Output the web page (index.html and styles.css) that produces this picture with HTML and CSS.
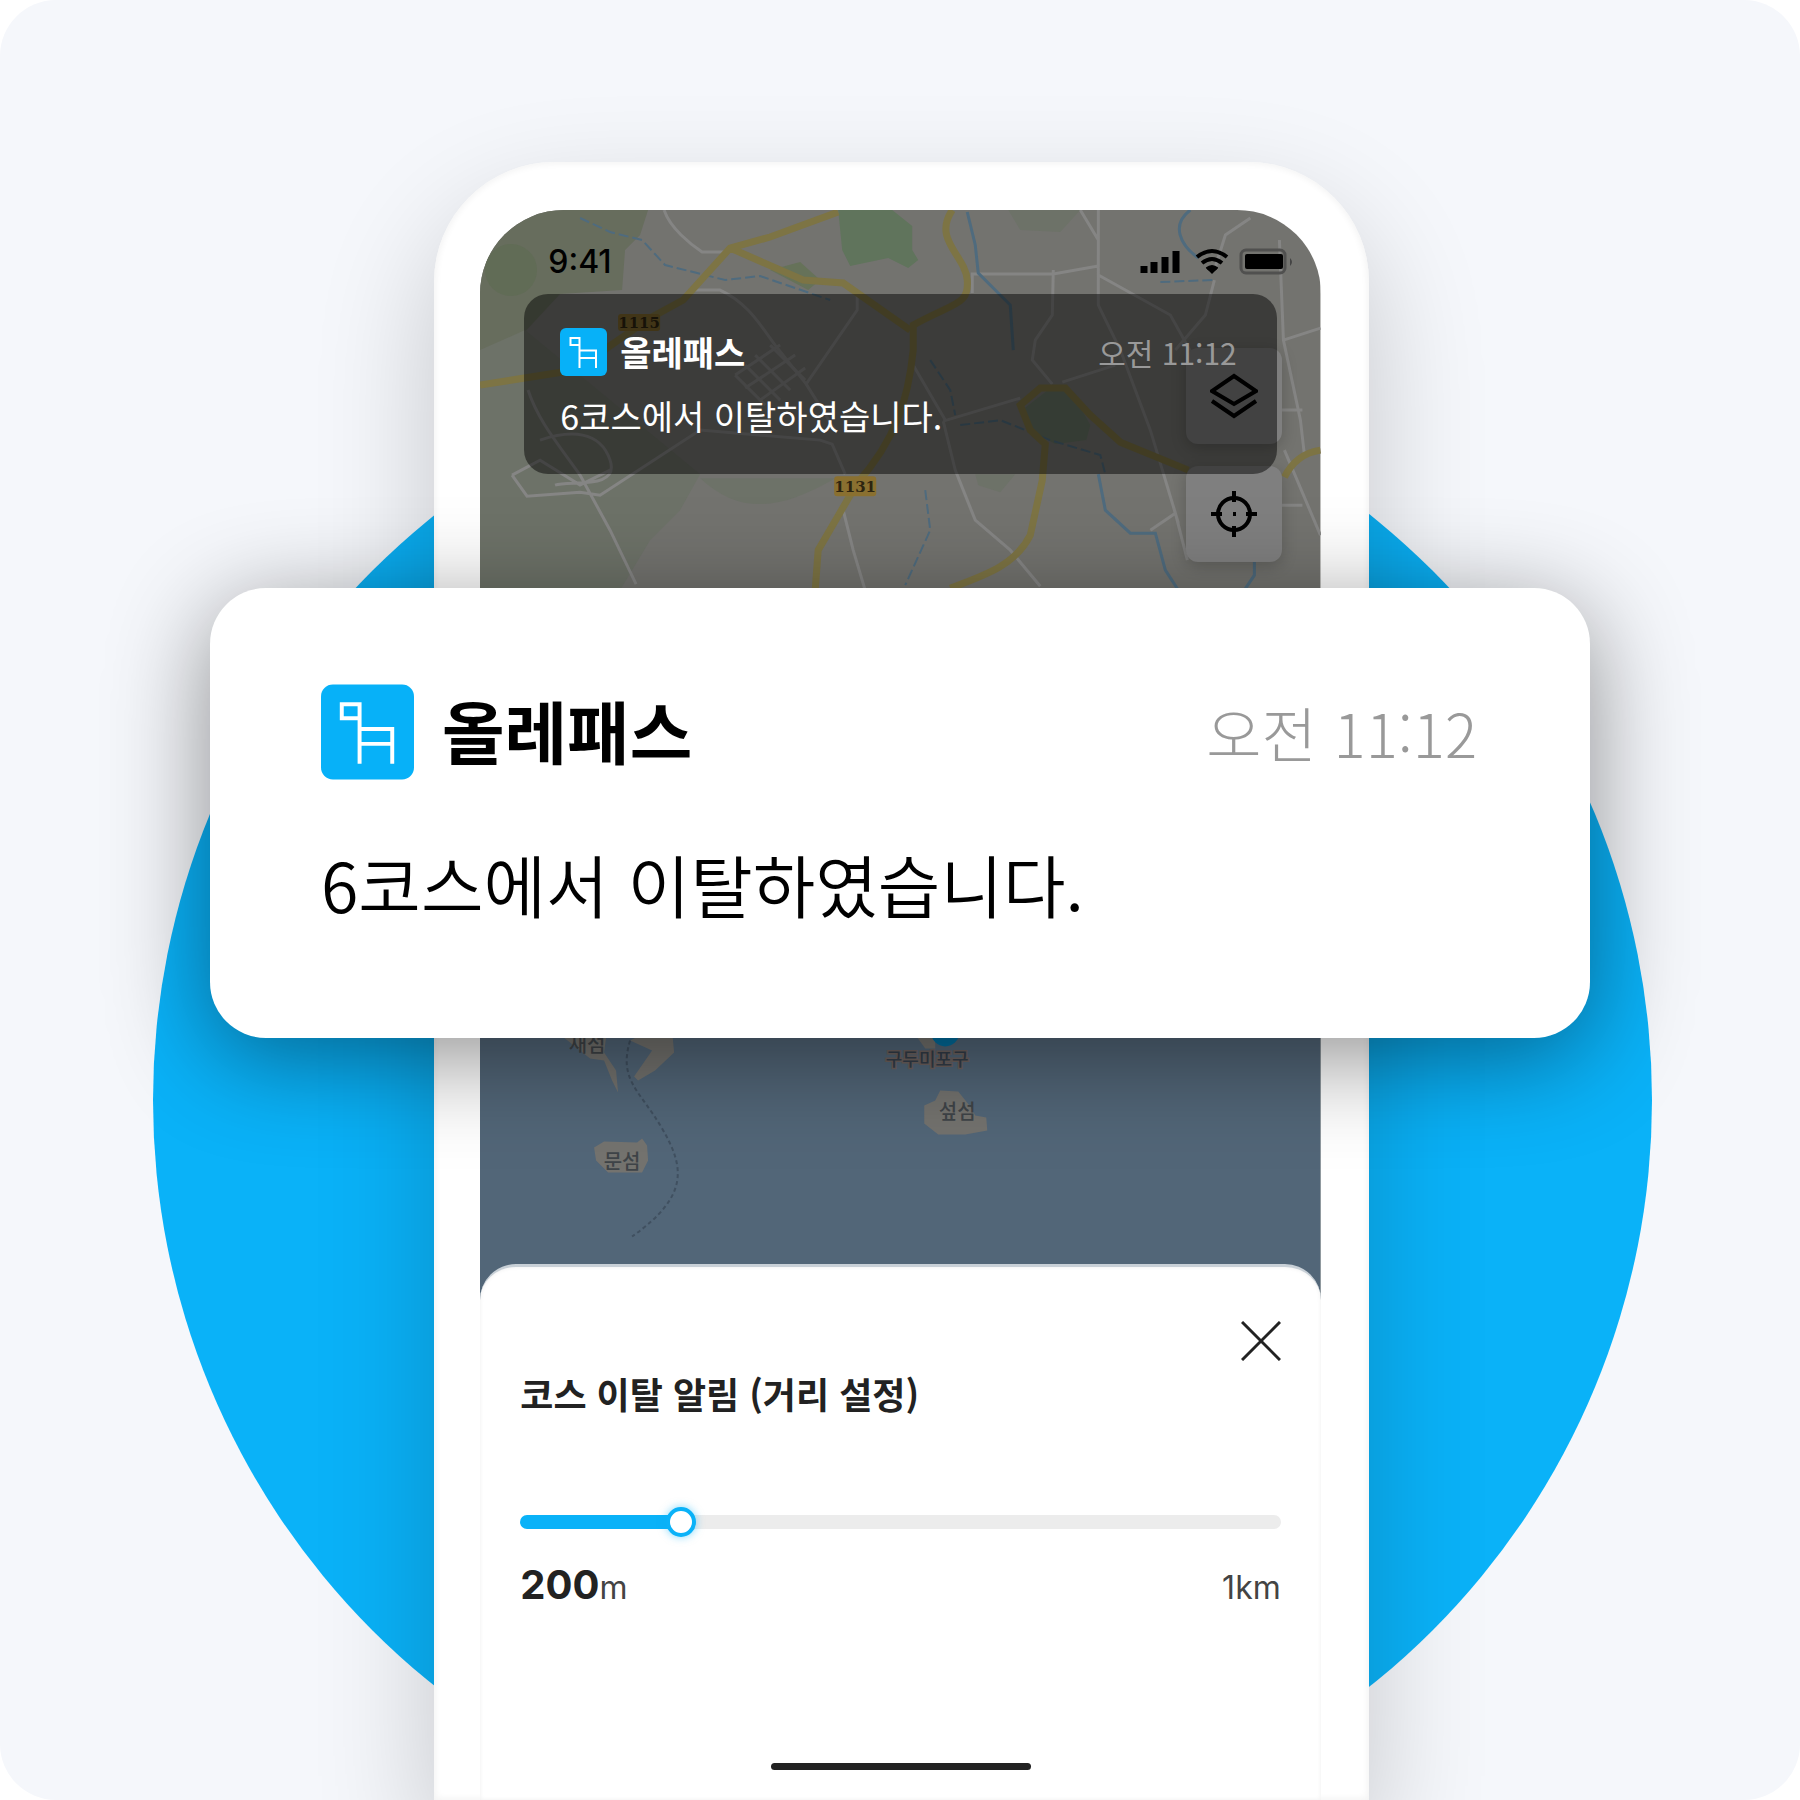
FILE: index.html
```html
<!DOCTYPE html>
<html lang="ko">
<head>
<meta charset="utf-8">
<meta name="viewport" content="width=device-width, initial-scale=1">
<title>올레패스</title>
<link rel="stylesheet" href="styles.css">
</head>
<body>
<svg width="0" height="0" class="defs" aria-hidden="true">
  <symbol id="logo" viewBox="0 0 94 96">
    <rect width="94" height="96" rx="12" fill="#07b1f8"/>
    <path d="M39 80V20H21V34H39M39 45H72V80M39 60H72" fill="none" stroke="#fff" stroke-width="4"/>
  </symbol>
</svg>
<main class="stage">
  <div class="disc"></div>
  <section class="phone">
    <div class="screen">
      <div class="map">
        <svg class="map-art" viewBox="480 210 840 1100" preserveAspectRatio="xMidYMin slice" aria-hidden="true">
          <rect x="480" y="210" width="840" height="1100" fill="#73736f"/>
          <path d="M480 210H648L640 235 625 250 622 290 560 294 480 380Z" fill="#676d5d"/>
          <path d="M480 350L525 330 700 474 680 510 650 540 620 590H480Z" fill="#6d7268"/>
          <path d="M700 478C740 515 780 510 835 478Z" fill="#6d7268"/>
          <circle cx="511" cy="270" r="26" fill="#616c56"/>
          <path d="M838 210H892L912 226V250L918 260 908 268 888 258 850 266 842 250Z" fill="#60745c"/>
          <path d="M770 270L800 262 820 280 808 290Z" fill="#667259"/>
          <path d="M1008 210H1080L1060 232 1020 230ZM975 474H1015L1000 492 978 485Z" fill="#6d7268"/>
          <path d="M1022 410L1053 386 1070 390 1090 425 1086 440 1055 444 1030 430Z" fill="#667464"/>
          <g fill="none" stroke="#858584" stroke-width="3">
            <path d="M664 210C670 228 690 244 702 252H728M690 290H720C748 303 760 325 775 345L806 384 857 310V296M806 384L835 430M528 390C538 420 555 440 580 475L610 530 636 584M512 475L527 496 580 492 600 495 700 430 820 440 832 444 845 474M843 510L853 550 865 590M512 475L540 460 580 485 610 470M540 440C570 430 600 430 610 460S570 480 555 485"/>
            <path d="M735 375L765 405M745 365L780 400M755 355L790 390M770 345L805 380M735 375L780 345M745 388L795 355M760 400L805 368"/>
            <path d="M972 293V274H1053L1098 266V210M1098 266V305L1120 350 1150 430 1178 523M1053 270 1052 315 1035 340 1032 360 1052 384M1080 210L1098 240M1098 275L1170 315 1195 360M1214 280L1205 315 1175 350M1214 270L1225 235 1250 218M1279 240 1283 340 1300 420 1304 455M1283 340 1320 328M1280 410H1302M1284 450L1320 535M1281 505H1302M943 421L955 470 975 520 1010 550 1040 586M943 421L1020 398M1062 382L1115 365M1150 530L1175 513 1187 560M910 360L945 420"/>
          </g>
          <g fill="none" stroke="#4f6b7e" stroke-width="3">
            <path d="M967 212L975 245 978 273 1010 305 1013 350M1190 210C1170 225 1180 245 1198 258M1098 474 1105 510 1130 533 1155 533 1165 570 1178 590M1254 560V575L1244 590"/>
            <path d="M580 218L610 232 642 240 665 265 725 280 760 276 830 300M930 360L950 390 955 415M960 425L1000 420 1050 440 1100 455 1105 474M925 490 930 530 905 585M1160 282 1212 280" stroke-width="2" stroke-dasharray="10 4"/>
          </g>
          <g fill="none" stroke="#7d7444" stroke-width="7">
            <path d="M480 385L575 370 650 318 683 300 730 248 770 237 838 212M730 248L803 280 843 283 900 323 910 330M952 210C932 240 965 255 967 280S955 302 913 325V350C908 400 895 440 857 483L818 550 815 590M1320 450C1300 453 1290 465 1284 477M1188 470L1120 442 1090 415 1065 388 1040 388 1020 405 1030 430 1045 444 1042 480 1030 535C1015 565 985 575 950 588"/>
          </g>
          <rect x="618" y="314" width="42" height="17" rx="3" fill="#7d662c"/>
          <text class="road" x="639" y="328">1115</text>
          <rect x="834" y="476" width="42" height="20" rx="3" fill="#8a7030"/>
          <text class="road" x="855" y="492">1131</text>
          <path d="M480 650H1320V1310H480Z" fill="#526678"/>
          <g fill="#74736f">
            <path d="M555 1030H607L604 1052 616 1070 618 1092 612 1080 604 1060 590 1058ZM630 1040L650 1030H672L674 1052 655 1070 638 1080 634 1076 652 1050ZM912 1030H935V1048H925Z"/>
            <path d="M924 1105L935 1100 940 1090 958 1091 970 1106 975 1115 986 1117 987 1130 965 1134 938 1134 924 1123ZM594 1147L604 1141 637 1142 642 1138 647 1145 648 1160 642 1172 608 1172 596 1160Z"/>
          </g>
          <circle cx="945" cy="1032" r="14" fill="#006fa1"/>
          <path d="M630 1040C618 1080 640 1090 662 1128S690 1195 632 1236" fill="none" stroke="#405060" stroke-width="2" stroke-dasharray="4 3"/>
          <g class="place">
            <text x="587" y="1052">새섬</text>
            <text x="927" y="1066" class="port">구두미포구</text>
            <text x="957" y="1119">섶섬</text>
            <text x="622" y="1169">문섬</text>
          </g>
        </svg>
        <div class="tools">
          <button class="tool" type="button" aria-label="지도 레이어">
            <svg viewBox="0 0 48 48"><path d="M24 4L46 19 24 32 2 19ZM2 29L24 44 46 29"/></svg>
          </button>
          <button class="tool" type="button" aria-label="현재 위치">
            <svg viewBox="0 0 48 48"><circle cx="24" cy="24" r="16"/><path d="M24 1V12M24 36V47M1 24H12M36 24H47M23 24H26"/></svg>
          </button>
        </div>
        <header class="status">
          <time>9:41</time>
          <svg class="status-icons" viewBox="0 0 154 28" aria-hidden="true">
            <path d="M4 18V25M14 14V25M25 9V25M36 3V25" stroke="#000" stroke-width="7"/>
            <path d="M57 9Q72-3 87 9M62 15Q72 7 82 15M67 21Q72 17 77 21" fill="none" stroke="#000" stroke-width="4"/>
            <path d="M66 20H78L72 26Z"/>
            <rect x="101" y="2" width="44" height="23" rx="5" fill="none" stroke="#50504f" stroke-width="3"/>
            <rect x="105" y="6" width="38" height="15" rx="2"/>
            <path d="M150 10Q154 14 150 18Z" fill="#444"/>
          </svg>
        </header>
        <article class="notice notice-small">
          <div class="notice-head">
            <svg class="logo" aria-hidden="true"><use href="#logo"/></svg>
            <strong>올레패스</strong>
            <time>오전 11:12</time>
          </div>
          <p>6코스에서 이탈하였습니다.</p>
        </article>
      </div>
      <form class="sheet">
        <button class="close" type="button" aria-label="닫기">
          <svg viewBox="0 0 40 40"><path d="M1 1L39 39M39 1L1 39"/></svg>
        </button>
        <label class="sheet-title" for="distance">코스 이탈 알림 (거리 설정)</label>
        <input class="slider" id="distance" type="range" min="0" max="1000" value="200">
        <div class="scale">
          <span><b>200</b>m</span>
          <span>1km</span>
        </div>
        <div class="home"></div>
      </form>
    </div>
  </section>
  <article class="notice notice-large">
    <div class="notice-head">
      <svg class="logo" aria-hidden="true"><use href="#logo"/></svg>
      <strong>올레패스</strong>
      <time>오전 11:12</time>
    </div>
    <p>6코스에서 이탈하였습니다.</p>
  </article>
</main>
</body>
</html>
```
FILE: styles.css
```css
* {
  box-sizing: border-box;
}

body {
  margin: 0;
  background: #fff;
  font-family: "Noto Sans CJK KR", "Noto Sans", sans-serif;
}

button {
  padding: 0;
  border: 0;
  background: none;
}

.defs {
  position: absolute;
}

.stage {
  position: relative;
  display: flex;
  justify-content: center;
  min-height: 100vh;
  padding: 162px 0 0 3px;
  overflow: hidden;
  border-radius: 56px;
  background: #f5f7fb;
}

.disc {
  position: absolute;
  top: 351px;
  left: 8.5%;
  width: 83.3%;
  aspect-ratio: 1;
  border-radius: 50%;
  background: #0ab2f8;
}

.phone {
  position: relative;
  display: flex;
  width: 52%;
  padding: 48px 48px 0 46px;
  border-radius: 120px 120px 0 0;
  background: #fff;
  box-shadow: inset 0 0 6px 2px #f4f4f4, 0 50px 120px rgba(0, 0, 0, .2);
}

.screen {
  display: flex;
  flex: 1;
  flex-direction: column;
  min-width: 0;
  overflow: hidden;
  border-radius: 84px 84px 0 0;
}

.map {
  position: relative;
  min-height: 1092px;
  padding: 34px 44px 0;
}

.map-art {
  position: absolute;
  inset: 0;
  width: 100%;
  height: 100%;
}

.road {
  fill: #2c2410;
  font: 700 15px "DejaVu Serif", serif;
  text-anchor: middle;
}

.place {
  fill: #3f4448;
  font-size: 20px;
  font-weight: 500;
  text-anchor: middle;
}

.port {
  fill: #333d49;
  stroke: #6e625f;
  stroke-width: 3px;
  font-size: 18px;
  paint-order: stroke;
}

.tools {
  position: absolute;
  top: 138px;
  right: 39px;
  display: grid;
  gap: 22px;
}

.tool {
  display: grid;
  place-items: center;
  width: 96px;
  height: 96px;
  border-radius: 12px;
  background: #7f7f7f;
  box-shadow: 0 4px 16px rgba(0, 0, 0, .2);
}

.tool svg,
.close svg {
  width: 48px;
  fill: none;
  stroke: #000;
  stroke-width: 4px;
}

.status {
  position: relative;
  display: flex;
  align-items: center;
  justify-content: space-between;
  height: 36px;
  padding: 0 0 0 24px;
  font: 500 32px/36px Inter, sans-serif;
}

.status-icons {
  width: 154px;
  margin-right: -17px;
}

.notice-head {
  display: flex;
  align-items: center;
}

.notice-head time {
  margin-left: auto;
  font-weight: 300;
}

.notice p {
  margin: 0;
}

.notice-small {
  position: relative;
  height: 180px;
  margin-top: 14px;
  padding: 34px 40px 0 36px;
  border-radius: 24px;
  background: rgba(0, 0, 0, .48);
  color: #fff;
  font-size: 34px;
  line-height: 48px;
}

.notice-small .logo {
  width: 47px;
  height: 48px;
  margin-right: 13px;
}

.notice-small time {
  color: #999;
  font-size: 30px;
  font-weight: 400;
}

.notice-small p {
  margin-top: 16px;
}

.notice-large {
  position: absolute;
  top: 588px;
  right: 210px;
  left: 210px;
  height: 450px;
  padding: 96px 113px 0 111px;
  border-radius: 56px;
  background: #fff;
  box-shadow: 0 20px 100px rgba(0, 0, 0, .44);
  color: #000;
  font-size: 68px;
  line-height: 96px;
}

.notice-large .logo {
  width: 93px;
  height: 96px;
  margin-right: 28px;
}

.notice-large strong {
  line-height: 92px;
  padding-bottom: 4px;
}

.notice-large time {
  color: #999;
  font-size: 60px;
}

.notice-large p {
  margin-top: 56px;
  font-weight: 350;
}

.sheet {
  position: relative;
  display: flex;
  flex: 1;
  flex-direction: column;
  margin-top: -38px;
  padding: 54px 40px 30px;
  border-top: 3px solid #c8d0d7;
  border-radius: 36px 36px 0 0;
  background: #fff;
  box-shadow: inset 0 0 4px #eee;
  color: #222;
}

.close {
  align-self: flex-end;
  width: 40px;
  height: 40px;
}

.close svg {
  display: block;
  width: 40px;
  stroke: #222;
  stroke-width: 3px;
}

.sheet-title {
  margin-top: 8px;
  font-size: 36px;
  font-weight: 700;
  line-height: 48px;
}

.slider {
  width: 100%;
  height: 30px;
  margin: 90px 0 0;
  appearance: none;
  background: none;
}

.slider::-webkit-slider-runnable-track {
  height: 14px;
  border-radius: 7px;
  background: linear-gradient(90deg, #0ab2f8 21%, #ececec 21%);
}

.slider::-webkit-slider-thumb {
  width: 30px;
  height: 30px;
  margin-top: -8px;
  appearance: none;
  border: 4px solid #0ab2f8;
  border-radius: 50%;
  background: #fff;
  box-shadow: 0 0 8px rgba(10, 178, 248, .5);
}

.scale {
  display: flex;
  align-items: baseline;
  justify-content: space-between;
  margin-top: 24px;
  color: #444;
  font: 400 32px/48px Inter, sans-serif;
}

.scale b {
  color: #222;
  font-size: 40px;
  font-weight: 700;
}

.home {
  align-self: center;
  width: 260px;
  height: 7px;
  margin-top: auto;
  border-radius: 4px;
  background: #222;
}
```
